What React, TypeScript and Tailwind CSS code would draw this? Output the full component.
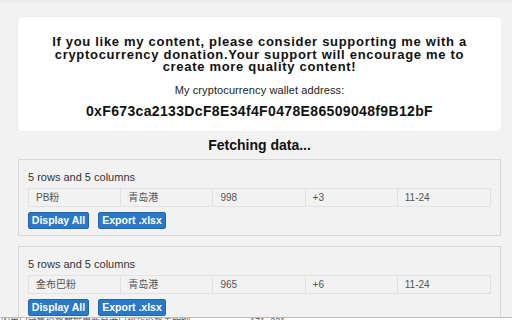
import React from "react";

const font = { fontFamily: '"Liberation Sans", Arial, "Noto Sans CJK SC", sans-serif' };

function Panel({ first, price, change }: { first: string; price: string; change: string }) {
  const cells = [first, "青岛港", price, change, "11-24"];
  return (
    <div className="border border-[#d6d6d6] bg-[#f2f2f2] pl-[9px] pr-[9px] pt-[10px] pb-[6px]">
      <div className="text-[11px] leading-[14px] text-[#333] mb-[4px]">5 rows and 5 columns</div>
      <div className="grid grid-cols-5 border border-[#e2e2e2] h-[19px]">
        {cells.map((c, i) => (
          <div
            key={i}
            className={`flex items-center pl-[7px] text-[10px] text-[#555] ${i < 4 ? "border-r border-[#e2e2e2]" : ""}`}
          >
            {c}
          </div>
        ))}
      </div>
      <div className="flex gap-[9px] mt-[5px]">
        <button className="h-[17px] w-[61px] rounded-[2px] bg-[#2a79c9] border border-[#2466ad] text-white text-[10.5px] font-bold leading-none">
          Display All
        </button>
        <button className="h-[17px] w-[68px] rounded-[2px] bg-[#2a79c9] border border-[#2466ad] text-white text-[10.5px] font-bold leading-none">
          Export .xlsx
        </button>
      </div>
    </div>
  );
}

export default function App() {
  return (
    <div className="w-[512px] h-[320px] overflow-hidden bg-[#f2f2f2] relative" style={font}>
      <div className="h-[3px] bg-[#e9edf0]" />
      <div className="pl-[18px] pr-[11px] pt-[14px]">
        <div className="bg-white rounded-[4px] shadow-[0_0_2px_rgba(0,0,0,0.08)] h-[114px] flex flex-col items-center pt-[19px]">
          <div className="text-center font-bold text-[13px] tracking-[0.7px] leading-[12.5px] text-[#111]">
            If you like my content, please consider supporting me with a
            <br />
            cryptocurrency donation.Your support will encourage me to
            <br />
            create more quality content!
          </div>
          <div className="text-[11px] tracking-[0.1px] text-[#222] mt-[9px] leading-[14px]">My cryptocurrency wallet address:</div>
          <div className="font-bold text-[14px] tracking-[0.35px] text-[#111] mt-[6px] leading-[16px]">
            0xF673ca2133DcF8E34f4F0478E86509048f9B12bF
          </div>
        </div>
        <div className="text-center font-bold text-[14px] text-[#111] leading-[16px] mt-[6px] mb-[6px]">Fetching data...</div>
        <Panel first="PB粉" price="998" change="+3" />
        <div className="h-[10px]" />
        <Panel first="金布巴粉" price="965" change="+6" />
      </div>
      <div className="absolute left-0 right-0 top-[317px] h-[3px] overflow-hidden bg-white border-t border-[#bbb]">
        <div className="flex text-[9px] leading-[10px] text-[#555] -mt-[2px]">
          <span className="w-[250px] pl-[1px]">的出口销售价格数据更新至港口现货价格表明细</span>
          <span className="w-[70px]">171~221</span>
        </div>
      </div>
    </div>
  );
}
